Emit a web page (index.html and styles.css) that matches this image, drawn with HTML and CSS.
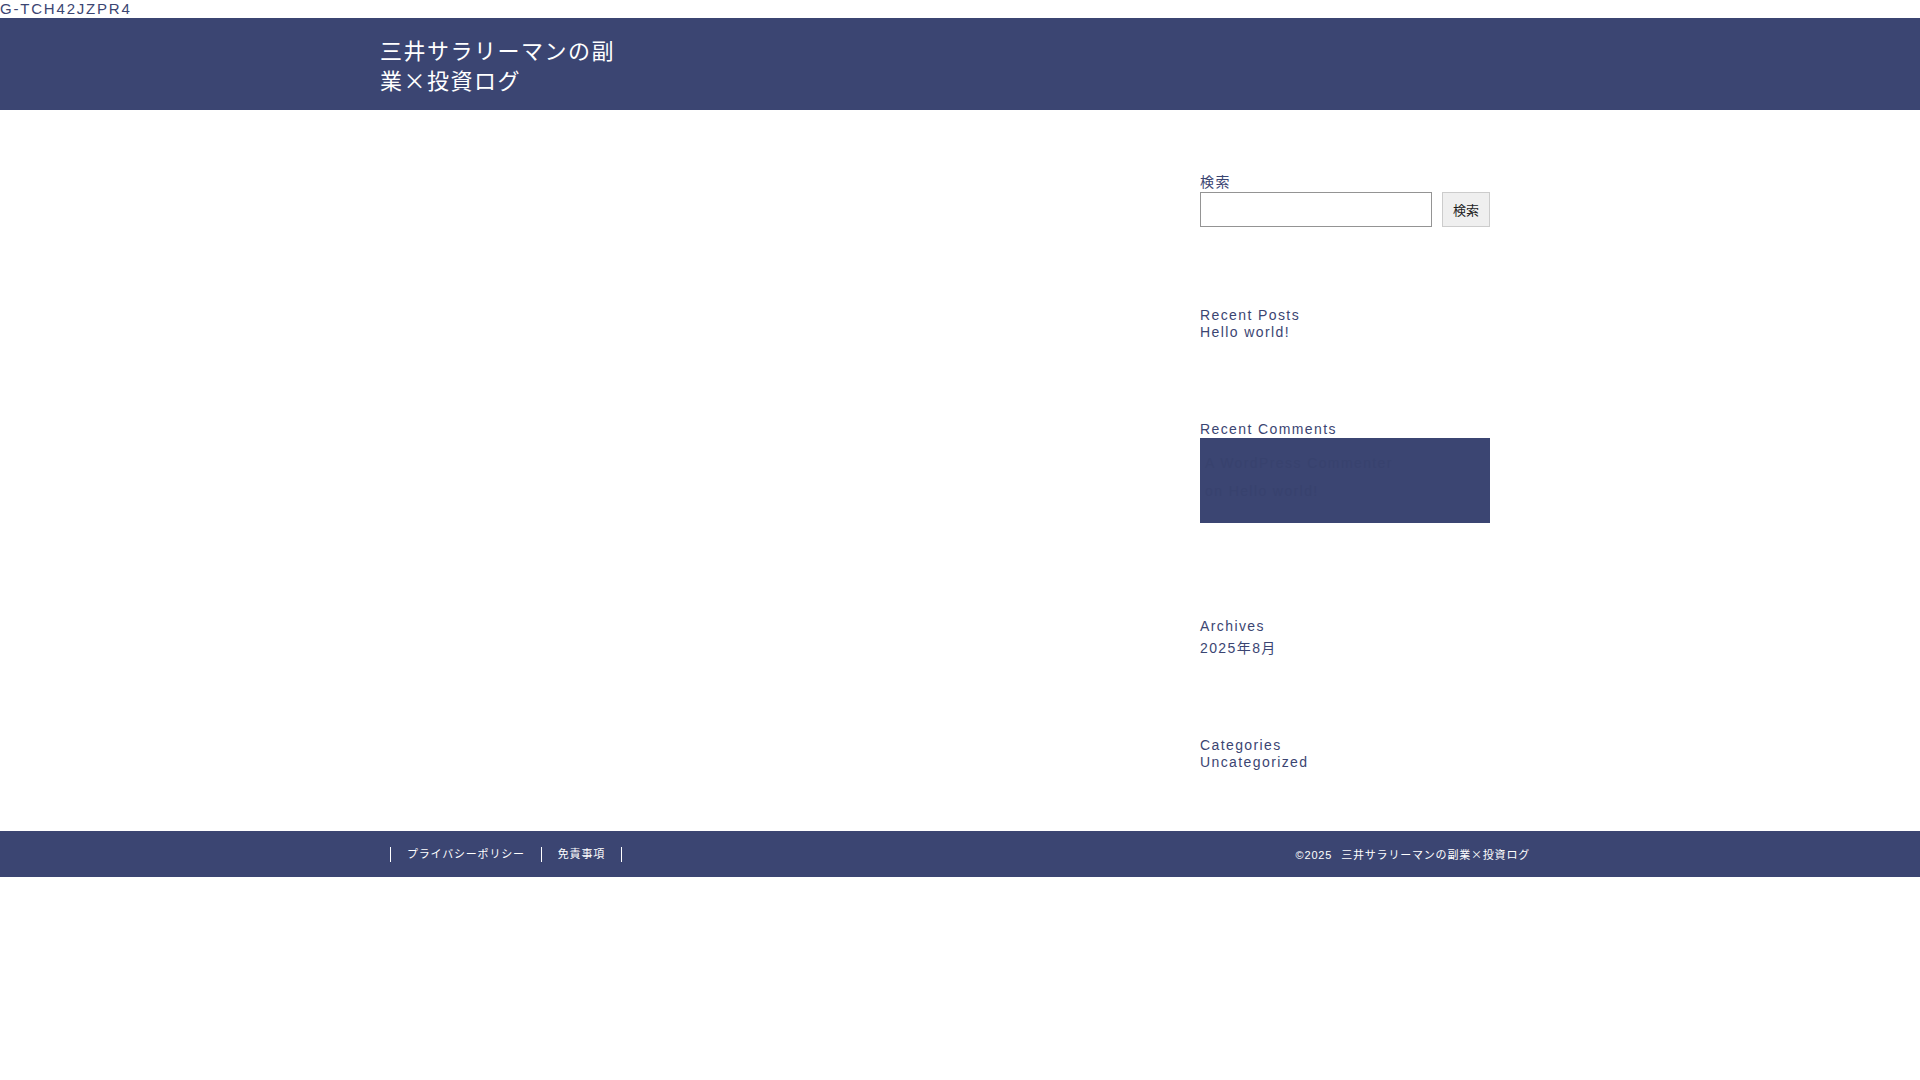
FILE: index.html
```html
<!DOCTYPE html>
<html lang="ja">
<head>
<meta charset="utf-8">
<title>三井サラリーマンの副業×投資ログ</title>
<link rel="stylesheet" href="styles.css">
</head>
<body>
<div class="gtag"><span>G-TCH42JZPR4</span></div>
<header class="site-header">
  <div class="header-inner">
    <p class="site-title"><a href="#">三井サラリーマンの副業×投資ログ</a></p>
  </div>
</header>
<div class="site-content">
  <main class="main"></main>
  <aside class="sidebar">
    <section class="widget widget-search">
      <form class="search-form">
        <label class="search-label" for="s">検索</label>
        <div class="search-row">
          <input id="s" class="search-input" type="search">
          <button class="search-button" type="button">検索</button>
        </div>
      </form>
    </section>
    <section class="widget widget-recent-posts">
      <h2 class="widget-title">Recent Posts</h2>
      <ul class="widget-list">
        <li><a href="#">Hello world!</a></li>
      </ul>
    </section>
    <section class="widget widget-comments">
      <h2 class="widget-title">Recent Comments</h2>
      <ol class="comment-box">
        <li class="comment-item"><a href="#">A WordPress Commenter</a> on <a href="#">Hello world!</a></li>
      </ol>
    </section>
    <section class="widget widget-archives">
      <h2 class="widget-title">Archives</h2>
      <ul class="widget-list archive-list">
        <li><a href="#">2025年8月</a></li>
      </ul>
    </section>
    <section class="widget widget-categories">
      <h2 class="widget-title">Categories</h2>
      <ul class="widget-list">
        <li><a href="#">Uncategorized</a></li>
      </ul>
    </section>
  </aside>
</div>
<footer class="site-footer">
  <div class="footer-inner">
    <nav class="footer-nav">
      <ul>
        <li><a href="#">プライバシーポリシー</a></li>
        <li><a href="#">免責事項</a></li>
      </ul>
    </nav>
    <p class="copyright">©2025<span class="copy-name">三井サラリーマンの副業×投資ログ</span></p>
  </div>
</footer>
</body>
</html>
```
FILE: styles.css
```css
body {
  margin: 0;
  background: #ffffff;
  color: #3b4572;
  font-family: "Liberation Sans", "Noto Sans CJK JP", sans-serif;
  font-size: 16px;
}

a {
  color: inherit;
  text-decoration: none;
}

.gtag span {
  font-size: 15px;
  letter-spacing: 1.8px;
}

.site-header {
  background: #3b4572;
}

.header-inner {
  width: 1160px;
  margin: 0 auto;
  padding: 16px 0 16px;
}

.site-title {
  margin: 0;
  width: 240px;
  font-family: "Noto Sans CJK JP", "Liberation Sans", sans-serif;
  font-size: 22px;
  line-height: 30px;
  letter-spacing: 1.5px;
}

.site-title a {
  color: #ffffff;
}

.site-content {
  width: 1140px;
  margin: 0 auto;
  box-sizing: border-box;
  display: grid;
  grid-template-columns: 1fr 290px;
  column-gap: 40px;
  padding: 61px 40px 61px 0;
}

.sidebar {
  display: flex;
  flex-direction: column;
  font-size: 14px;
  letter-spacing: 0.1em;
}

.widget-title {
  margin: 0;
  font-size: 14px;
  font-weight: normal;
}

.widget-list {
  margin: 1px 0 0;
  padding: 0;
  list-style: none;
}

.archive-list li {
  padding-top: 2px;
}

.search-form {
  margin: 0;
}

.search-label {
  display: block;
  margin-bottom: 1px;
}

.search-row {
  display: flex;
  gap: 10px;
  height: 35px;
}

.search-input {
  width: 232px;
  height: 35px;
  box-sizing: border-box;
  margin: 0;
  border: 1px solid #949494;
  background: #ffffff;
}

.search-button {
  width: 48px;
  height: 35px;
  box-sizing: border-box;
  margin: 0;
  padding: 0;
  border: 1px solid #cccccc;
  background: #efefef;
  color: #1e1e1e;
  font-family: "Liberation Sans", "Noto Sans CJK JP", sans-serif;
  font-size: 13px;
  letter-spacing: 0;
}

.widget-recent-posts {
  margin-top: 80px;
}

.widget-comments {
  margin-top: 81px;
}

.comment-box {
  margin: 1px 0 0;
  padding: 11px 5px 18px;
  height: 85px;
  box-sizing: border-box;
  list-style: none;
  background: #3b4572;
  color: #38426e;
}

.comment-item {
  width: 200px;
  line-height: 28px;
}

.widget-archives {
  margin-top: 95px;
}

.widget-categories {
  margin-top: 80px;
}

.site-footer {
  background: #3b4572;
}

.footer-inner {
  width: 1140px;
  height: 46px;
  margin: 0 auto;
  display: flex;
  align-items: center;
  justify-content: space-between;
  color: #ffffff;
  font-size: 11px;
  letter-spacing: 0.8px;
}

.footer-nav ul {
  display: flex;
  margin: 0;
  padding: 0;
  list-style: none;
  border-right: 1px solid #ffffff;
}

.footer-nav li {
  border-left: 1px solid #ffffff;
  padding: 0 16px;
  line-height: 15px;
}

.copyright {
  margin: 0;
}

.copy-name {
  margin-left: 9px;
  font-family: "Noto Sans CJK JP", "Liberation Sans", sans-serif;
}
```
